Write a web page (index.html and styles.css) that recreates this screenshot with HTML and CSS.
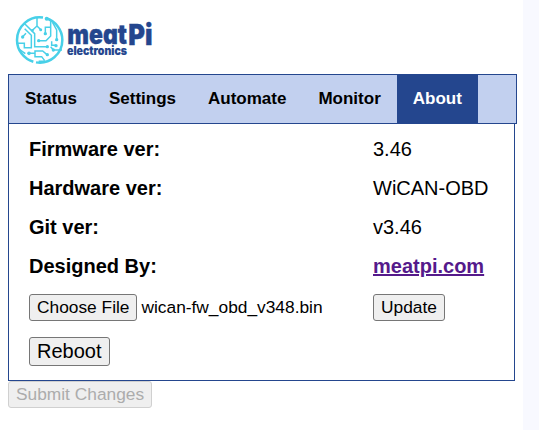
FILE: index.html
```html
<!DOCTYPE html>
<html lang="en">
<head>
<meta charset="utf-8">
<title>WiCAN</title>
<link rel="stylesheet" href="styles.css">
</head>
<body>
<main class="page">
  <svg class="logo" viewBox="0 0 456 192" role="img" aria-label="meatPi electronics">
    <g class="traces">
      <path class="ring" d="M105 28.7A68 68 0 0 0 27 96A68 68 0 0 0 76 161.3M84 163.1A68 68 0 0 0 163 96A68 68 0 0 0 114 30.7"/>
      <path d="M50 47L80 77V116H116M44 86L54 76M50 62L70 82V119H49V106H28M87 28V54L74 66M87 54L97 64M112 76V58H128M128 36V84L114 98H92M146 94V66L134 44M144 112H131V100M162 126H136L128 116M64 136H81V129H104L116 139M81 136V146H101L110 158M34 124L52 137M92 160H110"/>
      <circle cx="44" cy="87" r="5"/><circle cx="73" cy="67" r="4"/>
      <circle cx="98" cy="65" r="4.5"/><circle cx="112" cy="77" r="5"/>
      <circle cx="92" cy="98" r="5"/><circle cx="118" cy="116" r="5"/>
      <circle cx="146" cy="95" r="5"/><circle cx="144" cy="113" r="5"/>
      <circle cx="136" cy="126" r="5"/><circle cx="63" cy="136" r="5.5"/>
      <circle cx="118" cy="140" r="5"/><circle cx="116" cy="32" r="6"/>
    </g>
    <text class="brand" x="178" y="107" textLength="179" lengthAdjust="spacingAndGlyphs">meat</text>
    <text class="brand initials" x="361" y="112" textLength="73" lengthAdjust="spacingAndGlyphs">Pi</text>
    <text class="brand-sub" x="177" y="141" textLength="180" lengthAdjust="spacingAndGlyphs">electronics</text>
  </svg>
  <nav class="tabs">
    <a class="tab">Status</a>
    <a class="tab">Settings</a>
    <a class="tab">Automate</a>
    <a class="tab">Monitor</a>
    <a class="tab active">About</a>
  </nav>
  <section class="panel">
    <div class="label">Firmware ver:</div><div>3.46</div>
    <div class="label">Hardware ver:</div><div>WiCAN-OBD</div>
    <div class="label">Git ver:</div><div>v3.46</div>
    <div class="label">Designed By:</div><div><a class="link" href="#">meatpi.com</a></div>
    <div class="file"><button class="btn">Choose File</button><span>wican-fw_obd_v348.bin</span></div>
    <div class="file"><button class="btn">Update</button></div>
    <div class="file"><button class="btn large">Reboot</button></div>
  </section>
  <button class="btn submit" disabled>Submit Changes</button>
</main>
</body>
</html>
```
FILE: styles.css
```css
* { box-sizing: border-box; }
html { background: #f8f9ff; }
body {
  margin: 0;
  color: #000;
  font-family: "Liberation Sans", Arial, sans-serif;
}
.page {
  width: 523px;
  height: 430px;
  padding: 8px 6px 0 8px;
  background: #fff;
}
.logo { display: block; width: 152px; height: 64px; margin-bottom: 2px; }
.traces { fill: #48d0e8; }
.traces path { fill: none; stroke: #48d0e8; stroke-width: 4.5; }
.traces .ring { stroke-width: 7.5; }
.brand, .brand-sub {
  fill: #24468e;
  stroke: #24468e;
  font-family: Inter, sans-serif;
  font-weight: 900;
  font-feature-settings: "cv11";
}
.brand { font-size: 80px; stroke-width: 1; }
.initials { font-size: 86px; }
.brand-sub { font-size: 34px; stroke-width: 0.3; }
.tabs {
  display: flex;
  height: 50px;
  border: 1px solid #24468e;
  background: #c2d0ef;
}
.tab {
  padding: 14px 16px;
  font-size: 17px;
  font-weight: bold;
  line-height: 20px;
}
.tab.active { background: #24468e; color: #fff; }
.panel {
  display: grid;
  grid-template-columns: 344px 1fr;
  grid-template-rows: repeat(4, 39px) 43px 45px;
  width: 507px;
  height: 257px;
  padding: 6px 0 0 20px;
  border: 1px solid #24468e;
  border-top: 0;
  font-size: 20px;
  line-height: 39px;
}
.label { font-weight: bold; }
.link { color: #551a8b; font-weight: bold; }
.file {
  display: flex;
  align-items: center;
  gap: 4px;
  font-size: 17.33px;
}
.btn {
  display: block;
  height: 27px;
  padding: 0 7px;
  border: 1px solid #767676;
  border-radius: 3px;
  background: #efefef;
  color: #000;
  font: 17.33px/25px "Liberation Sans", Arial, sans-serif;
}
.btn.large { height: 29px; font-size: 20px; line-height: 27px; }
.btn.submit { border-color: #d0d0d0; color: #acacac; }
```
